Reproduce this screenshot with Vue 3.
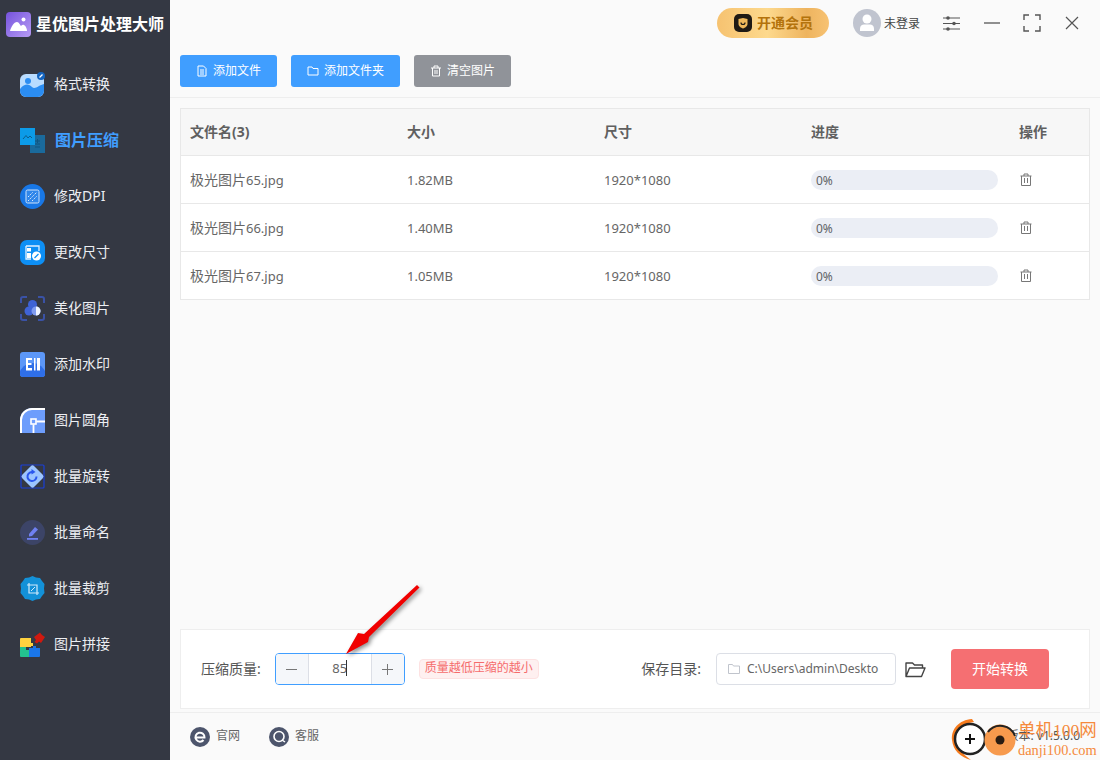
<template>
  <div class="app">
    <aside class="sidebar">
      <div class="brand">
        <svg class="brand-logo" viewBox="0 0 25 25">
          <defs>
            <linearGradient id="lg" x1="0" y1="0" x2="1" y2="1">
              <stop offset="0" stop-color="#7552dc" />
              <stop offset="1" stop-color="#b79cf5" />
            </linearGradient>
          </defs>
          <rect width="25" height="25" rx="4" fill="url(#lg)" />
          <path d="M4 19 C5 15 8 10 11 10 C13 10 14 13 15 14 C16 13 17 12.500 18 13 C20 14 21 17 21 19 Z" fill="#fff" />
          <circle cx="17.500" cy="7.500" r="2" fill="#fff" />
        </svg>
        <span>星优图片处理大师</span>
      </div>
      <nav class="nav">
        <div v-for="item in navItems" :key="item.label" class="nav-item" :class="{ active: item.active }">
          <svg class="nav-icon" viewBox="0 0 25 25">
            <template v-if="item.icon === 'format'">
              <rect x="0" y="2" width="24" height="23" rx="6" fill="#b9dcff" />
              <path d="M0 17 C5 11 9 12 12 15 C15 18 19 13 24 12 V19 a6 6 0 0 1 -6 6 H6 a6 6 0 0 1 -6 -6 Z" fill="#2b8df2" />
              <circle cx="8" cy="9" r="3" fill="#2b8df2" />
              <circle cx="21" cy="4" r="4" fill="#1565c0" />
              <path d="M19.500 5.500 L22.500 2.500" stroke="#fff" stroke-width="1.200" />
            </template>
            <template v-else-if="item.icon === 'compress'">
              <rect x="10" y="7" width="15" height="18" fill="#1a6a9c" />
              <rect x="0" y="0" width="15" height="17" fill="#0c9be8" />
              <path d="M3 11 L6 7.500 L8 10 L10 8 L12 10" fill="none" stroke="#0c5f8e" stroke-width="1" />
              <path d="M15 13 H20 M15 16 H20 M17.500 11 V15 M15 19 H20" stroke="#0f5580" stroke-width="1" />
            </template>
            <template v-else-if="item.icon === 'dpi'">
              <circle cx="12.500" cy="12.500" r="12.500" fill="#1877e6" />
              <rect x="6" y="6" width="13" height="13" rx="1.500" fill="#2f86ea" stroke="#cfe3fb" stroke-width="1" />
              <path d="M8 13 L13 8 M8 17 L17 8 M12 17 L17 12" stroke="#dcebfd" stroke-width="1" stroke-dasharray="1.500 1" />
            </template>
            <template v-else-if="item.icon === 'resize'">
              <rect width="25" height="25" rx="7" fill="#0d8ff5" />
              <path d="M6 6 H19 V11" fill="none" stroke="#dff0ff" stroke-width="1.300" />
              <path d="M6 6 V19 H11" fill="none" stroke="#dff0ff" stroke-width="1.300" />
              <rect x="7" y="8" width="4" height="3.500" fill="#fff" />
              <rect x="7" y="13" width="4" height="5" fill="#fff" />
              <circle cx="16.500" cy="16" r="4.500" fill="#fff" />
              <path d="M14.500 18 L18.500 14" stroke="#0d8ff5" stroke-width="1.300" />
            </template>
            <template v-else-if="item.icon === 'beauty'">
              <path d="M1 7 V3 a2 2 0 0 1 2 -2 H7 M18 1 H22 a2 2 0 0 1 2 2 V7 M24 18 V22 a2 2 0 0 1 -2 2 H18 M7 24 H3 a2 2 0 0 1 -2 -2 V18" fill="none" stroke="#3a52a6" stroke-width="2" />
              <circle cx="12.500" cy="8.500" r="4.500" fill="#3f63d6" />
              <circle cx="9" cy="15" r="4.500" fill="#3f63d6" />
              <circle cx="16" cy="15" r="4.500" fill="#7f9bf0" />
              <path d="M16 10.500 a4.500 4.500 0 0 1 0 9 Z" fill="#eef3ff" />
            </template>
            <template v-else-if="item.icon === 'mark'">
              <rect width="25" height="25" rx="3" fill="#5c97f8" />
              <path d="M0 19 C3 14 7 11 12.500 11 C18 11 22 14 25 19 V22 a3 3 0 0 1 -3 3 H3 a3 3 0 0 1 -3 -3 Z" fill="#2f6fe8" />
              <path d="M6 6 H12 V8 H8 V11 H11.500 V13 H8 V16 H12 V18.500 H6 Z M14 6 H15.500 V18.500 H14 Z M17 6 H20 V18.500 H17 Z" fill="#fff" />
            </template>
            <template v-else-if="item.icon === 'corner'">
              <path d="M0 25 V12 A12 12 0 0 1 12 0 H25 V25 Z" fill="#6d9dfc" />
              <path d="M1 25 V12 A11 11 0 0 1 12 1 H25" fill="none" stroke="#fff" stroke-width="2" />
              <rect x="11" y="11" width="5" height="5" fill="#6d9dfc" stroke="#fff" stroke-width="1.600" />
              <path d="M16.500 13.500 H25 M13.500 16.500 V25" stroke="#fff" stroke-width="1.800" />
            </template>
            <template v-else-if="item.icon === 'rotate'">
              <rect x="1" y="1" width="23" height="23" rx="1" fill="none" stroke="#1a3fd8" stroke-width="1.200" />
              <rect x="4" y="4" width="17" height="17" rx="2.500" fill="#9cc4ff" transform="rotate(45 12.500 12.500)" />
              <path d="M16.500 12.500 a4.500 4.500 0 1 1 -3 -4.200" fill="none" stroke="#2b57ee" stroke-width="2" />
              <path d="M11.500 5 L15.500 8 L11.500 10.500 Z" fill="#2b57ee" />
            </template>
            <template v-else-if="item.icon === 'rename'">
              <circle cx="12.500" cy="12.500" r="12.500" fill="#3c4467" />
              <path d="M9 14 L15 7 L18 9.500 L12 16 L9 16.500 Z" fill="#6f80f0" />
              <rect x="7" y="18" width="11" height="1.800" fill="#6f80f0" />
            </template>
            <template v-else-if="item.icon === 'crop'">
              <path d="M12.500 0 L16 1.500 L20 2 L22 5 L24.500 8 L24 12.500 L24.500 17 L22 20 L20 23 L16 23.500 L12.500 25 L9 23.500 L5 23 L3 20 L0.500 17 L1 12.500 L0.500 8 L3 5 L5 2 L9 1.500 Z" fill="#1391d8" />
              <path d="M9 7 V17 H19 M7 9 H17 V19" fill="none" stroke="#cfeafb" stroke-width="1.200" />
              <path d="M11 15 L15 11" stroke="#cfeafb" stroke-width="1" />
            </template>
            <template v-else-if="item.icon === 'puzzle'">
              <path d="M0 7 a1 1 0 0 1 1 -1 H11 V11 H13 V14 H11 V15 H0 Z" fill="#ffd23f" />
              <path d="M0 15 H6 V18 H9 V25 H1 a1 1 0 0 1 -1 -1 Z" fill="#23c28f" />
              <path d="M9 16 H13 V14 H16 V16 H20 V24 a1 1 0 0 1 -1 1 H9 Z" fill="#1a76ea" />
              <path d="M14 5 L20 0.500 L22 3 L25 5 L21 11 L19 9.500 L17 11.500 L14.500 10 L16 8 Z" fill="#d0190f" />
            </template>
          </svg>
          <span class="nav-label">{{ item.label }}</span>
        </div>
      </nav>
    </aside>

    <main class="content">
      <header class="topbar">
        <div class="vip">
          <svg class="vip-icon" viewBox="0 0 18 18">
            <rect width="18" height="18" rx="5" fill="#1f1a14" />
            <path d="M4.500 5 L9 4 L13.500 5 V10 C13.500 12 11 14 9 14.500 C7 14 4.500 12 4.500 10 Z" fill="#f0b95b" />
            <path d="M7 8.500 a2 2 0 0 0 4 0" fill="none" stroke="#1f1a14" stroke-width="1.200" />
          </svg>
          <span class="vip-text">开通会员</span>
        </div>
        <div class="user">
          <svg class="avatar" viewBox="0 0 28 28">
            <circle cx="14" cy="14" r="14" fill="#c0c4cf" />
            <circle cx="14" cy="10" r="4.500" fill="#fff" />
            <path d="M7 22 V19.500 C7 17 9 15.500 11 15.500 H17 C19 15.500 21 17 21 19.500 V22 Z" fill="#fff" />
          </svg>
          <span>未登录</span>
        </div>
        <svg class="win win-sliders" viewBox="0 0 17 17">
          <path d="M0 3 H17 M0 8.500 H17 M0 14 H17" stroke="#555" stroke-width="1.200" />
          <circle cx="5" cy="3" r="1.800" fill="#555" />
          <circle cx="11" cy="8.500" r="1.800" fill="#555" />
          <circle cx="5" cy="14" r="1.800" fill="#555" />
        </svg>
        <svg class="win win-min" viewBox="0 0 16 16">
          <path d="M0 8 H16" stroke="#555" stroke-width="1.300" />
        </svg>
        <svg class="win win-max" viewBox="0 0 18 18">
          <path d="M1 6 V1 H6 M12 1 H17 V6 M17 12 V17 H12 M6 17 H1 V12" fill="none" stroke="#555" stroke-width="1.400" />
        </svg>
        <svg class="win win-close" viewBox="0 0 14 14">
          <path d="M1 1 L13 13 M13 1 L1 13" stroke="#555" stroke-width="1.200" />
        </svg>
      </header>

      <div class="toolbar">
        <button class="btn primary">
          <svg class="btn-icon" viewBox="0 0 12 12">
            <path d="M2 1 H7.500 L10 3.500 V11 H2 Z M4 5 H8 M4 7 H8 M4 9 H8" fill="none" stroke="#fff" stroke-width="1" />
          </svg>
          <span class="btn-text">添加文件</span>
        </button>
        <button class="btn primary">
          <svg class="btn-icon" viewBox="0 0 12 12">
            <path d="M1 2 H5 L6 3.500 H11 V10 H1 Z" fill="none" stroke="#fff" stroke-width="1" />
          </svg>
          <span class="btn-text">添加文件夹</span>
        </button>
        <button class="btn gray">
          <svg class="btn-icon" viewBox="0 0 12 12">
            <path d="M1 3 H11 M4 3 V1 H8 V3 M2.500 3 V11 H9.500 V3 M5 5 V9 M7 5 V9" fill="none" stroke="#fff" stroke-width="1" />
          </svg>
          <span class="btn-text">清空图片</span>
        </button>
      </div>

      <section class="table">
        <div class="row head">
          <div>文件名(3)</div>
          <div>大小</div>
          <div>尺寸</div>
          <div>进度</div>
          <div>操作</div>
        </div>
        <div v-for="file in files" :key="file.num" class="row">
          <div class="name"><span class="cn">极光图片</span>{{ file.num }}.jpg</div>
          <div>{{ file.size }}</div>
          <div>1920*1080</div>
          <div><div class="progress">0%</div></div>
          <div>
            <svg class="trash" viewBox="0 0 12 13">
              <path d="M0.500 3 H11.500 M4 3 V1 H8 V3 M1.500 3 V12.500 H10.500 V3 M4.500 5 V10 M7.500 5 V10" fill="none" stroke="#777" stroke-width="1" />
            </svg>
          </div>
        </div>
      </section>

      <div class="spacer"></div>

      <section class="panel">
        <div class="quality">
          <span class="label">压缩质量:</span>
          <div class="stepper">
            <div class="step">
              <svg viewBox="0 0 11 11" class="step-icon"><path d="M0 5.500 H11" stroke="#777" stroke-width="1" /></svg>
            </div>
            <div class="value">85<i class="caret"></i></div>
            <div class="step plus">
              <svg viewBox="0 0 11 11" class="step-icon"><path d="M0 5.500 H11 M5.500 0 V11" stroke="#777" stroke-width="1" /></svg>
            </div>
          </div>
          <span class="tag">质量越低压缩的越小</span>
        </div>
        <div class="save">
          <span class="label">保存目录:</span>
          <div class="path">
            <svg class="path-icon" viewBox="0 0 12 12">
              <path d="M0.500 1.500 H4.500 L5.500 3 H11.500 V10.500 H0.500 Z" fill="none" stroke="#c0c4cc" stroke-width="1" />
            </svg>
            <span class="path-text">C:\Users\admin\Deskto</span>
          </div>
          <svg class="open" viewBox="0 0 21 17">
            <path d="M1 15.500 V2 H7.500 L9.500 4 H17.500 V7 M1 15.500 H16.500 L20 7 H4.500 L1 15.500 Z" fill="none" stroke="#444" stroke-width="1.400" stroke-linejoin="round" />
          </svg>
          <button class="start"><span class="btn-text">开始转换</span></button>
        </div>
      </section>

      <footer class="footer">
        <div class="link">
          <svg class="link-icon" viewBox="0 0 20 20">
            <circle cx="10" cy="10" r="10" fill="#4d556c" />
            <path d="M5.500 10.500 H14.500 A4.500 4.500 0 1 0 13.500 13" fill="none" stroke="#fff" stroke-width="2" />
          </svg>
          <span class="link-text">官网</span>
        </div>
        <div class="link">
          <svg class="link-icon" viewBox="0 0 20 20">
            <circle cx="10" cy="10" r="10" fill="#4d556c" />
            <circle cx="10" cy="9.500" r="5" fill="none" stroke="#fff" stroke-width="1.600" />
            <path d="M13 13 L16 15" stroke="#fff" stroke-width="1.500" />
          </svg>
          <span class="link-text">客服</span>
        </div>
        <span class="version">版本: v1.5.0.0</span>
      </footer>
    </main>

    <svg class="arrow" viewBox="0 0 90 80">
      <path d="M77 5 L79.500 7.500 L29 57 L28 62 L6 74 L18 53 L24 54 Z" fill="#f00000" />
    </svg>

    <div class="watermark">
      <svg class="wm-logo" viewBox="0 0 66 42">
        <path d="M21 1 C8 2 0 11 1 22 C2 32 9 39 20 42 C12 36 5 30 5 21 C5 12 12 5 23 4 Z" fill="#f57a1c" />
        <circle cx="19" cy="21" r="15" fill="#fff" stroke="#222" stroke-width="2.500" />
        <path d="M14 21 H24 M19 16 V26" stroke="#111" stroke-width="2" />
        <circle cx="49" cy="22" r="15.500" fill="#f79a4d" />
        <path d="M37 14 A15.500 15.500 0 0 1 64 18" fill="none" stroke="#222" stroke-width="2" />
        <circle cx="49" cy="22" r="4.500" fill="#2a1c12" />
      </svg>
      <div class="wm-text">
        <span class="wm-title">单机100网</span>
        <span class="wm-url">danji100.com</span>
      </div>
    </div>
  </div>
</template>

<script setup>
const navItems = [
  { label: '格式转换', icon: 'format' },
  { label: '图片压缩', icon: 'compress', active: true },
  { label: '修改DPI', icon: 'dpi' },
  { label: '更改尺寸', icon: 'resize' },
  { label: '美化图片', icon: 'beauty' },
  { label: '添加水印', icon: 'mark' },
  { label: '图片圆角', icon: 'corner' },
  { label: '批量旋转', icon: 'rotate' },
  { label: '批量命名', icon: 'rename' },
  { label: '批量裁剪', icon: 'crop' },
  { label: '图片拼接', icon: 'puzzle' }
]

const files = [
  { num: 65, size: '1.82MB' },
  { num: 66, size: '1.40MB' },
  { num: 67, size: '1.05MB' }
]
</script>

<style>
html,
body {
  margin: 0;
  overflow: hidden;
}
</style>

<style scoped>
.app {
  position: relative;
  display: flex;
  width: 1100px;
  height: 760px;
  overflow: hidden;
  font-family: "Noto Sans", "Noto Sans CJK SC", sans-serif;
  font-size: 14px;
  color: #606266;
  background: #fafafa;
}

.sidebar {
  width: 170px;
  flex-shrink: 0;
  background: #343843;
  color: #fff;
}

.brand {
  display: flex;
  align-items: center;
  gap: 5px;
  height: 25px;
  padding: 12px 0 0 6px;
  font-size: 16px;
  font-weight: 700;
  white-space: nowrap;
}

.brand span {
  margin-top: -3px;
}

.brand-logo {
  width: 25px;
  height: 25px;
}

.nav {
  margin-top: 19px;
}

.nav-item {
  display: flex;
  align-items: center;
  gap: 9px;
  height: 56px;
  padding-left: 20px;
  font-size: 14px;
  color: #eceef2;
  white-space: nowrap;
}

.nav-label {
  margin-top: -2px;
}

.nav-item.active {
  gap: 10px;
  font-size: 16px;
  font-weight: 700;
  color: #409eff;
}

.nav-icon {
  width: 25px;
  height: 25px;
  flex-shrink: 0;
}

.content {
  flex: 1;
  display: flex;
  flex-direction: column;
  min-width: 0;
}

.topbar {
  height: 46px;
  display: flex;
  align-items: center;
  padding-left: 547px;
  box-sizing: border-box;
}

.vip {
  width: 112px;
  height: 30px;
  box-sizing: border-box;
  display: flex;
  align-items: center;
  gap: 5px;
  padding-left: 17px;
  border-radius: 15px;
  background: linear-gradient(90deg, #f6c270 0%, #fdd98d 45%, #eeb45f 80%, #f7c272 100%);
  color: #b4730c;
  font-size: 14px;
  font-weight: 700;
}

.vip-text {
  margin-top: -2px;
}

.vip-icon {
  width: 18px;
  height: 18px;
}

.user {
  display: flex;
  align-items: center;
  gap: 3px;
  margin-left: 24px;
  font-size: 12px;
  color: #444;
}

.avatar {
  width: 28px;
  height: 28px;
}

.win {
  flex-shrink: 0;
}

.win-sliders {
  width: 17px;
  height: 17px;
  margin-left: 23px;
}

.win-min {
  width: 16px;
  height: 16px;
  margin-left: 24px;
}

.win-max {
  width: 18px;
  height: 18px;
  margin-left: 23px;
}

.win-close {
  width: 14px;
  height: 14px;
  margin-left: 24px;
}

.toolbar {
  display: flex;
  gap: 14px;
  padding: 9px 10px 10px;
  border-bottom: 1px solid #eeeeee;
}

.btn {
  display: flex;
  align-items: center;
  justify-content: center;
  gap: 5px;
  height: 32px;
  padding: 0;
  border: none;
  border-radius: 3px;
  color: #fff;
  font-family: inherit;
  font-size: 12px;
}

.btn-text {
  display: block;
  margin-top: -2px;
}

.btn.primary {
  background: #409eff;
}

.btn.primary:nth-child(1) {
  width: 97px;
}

.btn.primary:nth-child(2) {
  width: 109px;
}

.btn.gray {
  width: 97px;
  background: #909399;
}

.btn-icon {
  width: 12px;
  height: 12px;
}

.table {
  margin: 10px 10px 0;
  border: 1px solid #e8e8e8;
  border-bottom: none;
  background: #fff;
}

.row {
  display: grid;
  grid-template-columns: 217px 197px 207px 208px 1fr;
  align-items: center;
  height: 47px;
  border-bottom: 1px solid #e8e8e8;
  font-size: 13px;
  color: #666;
}

.name {
  margin-top: -2px;
}

.cn {
  font-size: 14px;
}

.row.head {
  height: 47px;
  padding-bottom: 2px;
  box-sizing: border-box;
  background: #f7f7f7;
  font-weight: 700;
  font-size: 14px;
  color: #606060;
}

.row > div {
  padding-left: 9px;
}

.progress {
  width: 187px;
  height: 20px;
  box-sizing: border-box;
  padding-left: 5px;
  border-radius: 10px;
  background: #ebeef5;
  font-size: 12px;
  line-height: 21px;
  color: #606266;
}

.trash {
  display: block;
  width: 12px;
  height: 13px;
  margin-left: 1px;
}

.spacer {
  flex: 1;
}

.panel {
  display: flex;
  align-items: center;
  justify-content: space-between;
  height: 80px;
  box-sizing: border-box;
  margin: 0 10px 3px;
  padding: 0 40px 0 20px;
  border: 1px solid #eeeeee;
  background: #fff;
}

.quality,
.save {
  display: flex;
  align-items: center;
}

.label {
  margin-top: -3px;
  font-size: 14px;
  color: #555;
  white-space: nowrap;
}

.quality .label {
  margin-right: 14px;
}

.save .label {
  margin-right: 15px;
}

.stepper {
  display: flex;
  width: 130px;
  height: 32px;
  box-sizing: border-box;
  border: 1px solid #409eff;
  border-radius: 4px;
  overflow: hidden;
}

.step {
  display: flex;
  align-items: center;
  justify-content: center;
  width: 32px;
  background: #f5f7fa;
  border-right: 1px solid #dcdfe6;
}

.step.plus {
  border-right: none;
  border-left: 1px solid #dcdfe6;
}

.step-icon {
  width: 11px;
  height: 11px;
}

.value {
  flex: 1;
  text-align: center;
  font-size: 13px;
  line-height: 29px;
  color: #666;
}

.caret {
  display: inline-block;
  width: 1px;
  height: 16px;
  margin-left: -1px;
  vertical-align: -3px;
  background: #333;
}

.tag {
  margin-left: 14px;
  height: 20px;
  box-sizing: border-box;
  padding: 0 5px;
  border: 1px solid #fde2e2;
  border-radius: 4px;
  background: #fef0f0;
  color: #f56c6c;
  font-size: 12px;
  line-height: 16px;
  white-space: nowrap;
}

.path {
  display: flex;
  align-items: center;
  gap: 7px;
  width: 180px;
  height: 32px;
  box-sizing: border-box;
  padding-left: 11px;
  border: 1px solid #dcdfe6;
  border-radius: 4px;
  font-size: 12px;
  color: #666;
  white-space: nowrap;
  overflow: hidden;
}

.path-text {
  margin-top: -2px;
}

.path-icon {
  width: 12px;
  height: 12px;
  flex-shrink: 0;
}

.open {
  width: 21px;
  height: 17px;
  margin-left: 9px;
}

.start {
  width: 98px;
  height: 40px;
  margin-left: 25px;
  padding: 0;
  border: none;
  border-radius: 4px;
  background: #f56f72;
  color: #fff;
  font-family: inherit;
  font-size: 14px;
}

.footer {
  display: flex;
  align-items: center;
  gap: 29px;
  height: 48px;
  box-sizing: border-box;
  padding: 0 20px 0 20px;
  border-top: 1px solid #eeeeee;
  font-size: 12px;
  color: #666;
}

.link {
  display: flex;
  align-items: center;
  gap: 6px;
  font-size: 12px;
}

.link-text {
  margin-top: -3px;
}

.link-icon {
  width: 20px;
  height: 20px;
}

.version {
  margin-left: auto;
  margin-top: -3px;
  color: #555;
}

.arrow {
  position: absolute;
  left: 340px;
  top: 580px;
  width: 90px;
  height: 80px;
  filter: drop-shadow(2px 2px 2px rgba(0, 0, 0, 0.45));
  pointer-events: none;
}

.watermark {
  position: absolute;
  left: 951px;
  top: 718px;
  display: flex;
  align-items: center;
  gap: 1px;
  pointer-events: none;
}

.wm-logo {
  width: 66px;
  height: 42px;
}

.wm-text {
  display: flex;
  flex-direction: column;
  font-family: "Liberation Serif", "Noto Sans CJK SC", serif;
  color: #f58a3c;
}

.wm-title {
  font-size: 17.500px;
  line-height: 22px;
  white-space: nowrap;
}

.wm-url {
  font-size: 14.400px;
  line-height: 18px;
  white-space: nowrap;
}
</style>
